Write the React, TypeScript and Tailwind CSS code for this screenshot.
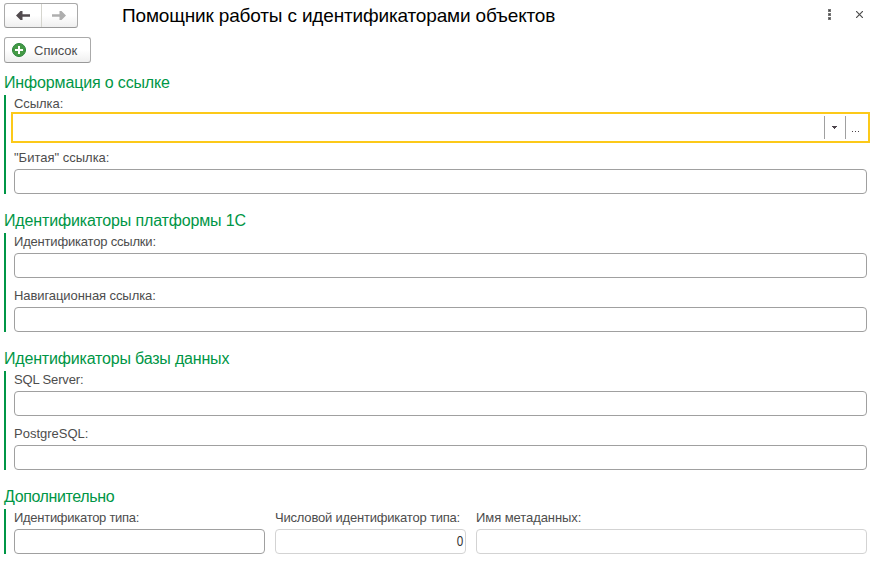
import type { ReactNode } from "react";

function Label({ text, spacing = "" }: { text: string; spacing?: string }) {
  return <span className={`block h-5 whitespace-nowrap text-[13px] leading-[18px] text-[#4d4d4d] ${spacing}`}>{text}</span>;
}

function Field({
  label,
  spacing,
  className = "",
  box = "border-[#a0a0a0]",
  value = "",
}: {
  label: string;
  spacing?: string;
  className?: string;
  box?: string;
  value?: string;
}) {
  return (
    <label className={`block ${className}`}>
      <Label text={label} spacing={spacing} />
      <span className={`flex h-[25px] items-center justify-end rounded-[4px] border bg-white pr-[2px] text-[13px] text-[#333] ${box}`}>
        <span className="origin-right scale-x-90 scale-y-110">{value}</span>
      </span>
    </label>
  );
}

function Section({ title, spacing = "", children }: { title: string; spacing?: string; children: ReactNode }) {
  return (
    <section>
      <h2 className={`h-6 whitespace-nowrap text-[16px] leading-[23px] text-[#009646] ${spacing}`}>{title}</h2>
      <div className="border-l-2 border-[#009646] pl-2">{children}</div>
    </section>
  );
}

function ReferenceField() {
  return (
    <div>
      <Label text="Ссылка:" spacing="tracking-[-0.05px]" />
      <div className="-mx-[3px] -my-[3px] flex h-[31px] items-start justify-end border-2 border-[#fcc919] bg-white pt-[2px]">
        <button className="flex h-[23px] w-[21px] items-center justify-center border-l border-[#a0a0a0] pr-[2px]" aria-label="Выбрать">
          <svg width="5" height="3" viewBox="0 0 5 3" shapeRendering="crispEdges" fill="#4d444b">
            <path d="M0 0h5v1H0zM1 1h3v1H1zM2 2h1v1H2z" />
          </svg>
        </button>
        <button className="flex h-[23px] w-[23px] items-center justify-center border-l border-[#a0a0a0] pr-[2px] pt-[7px]" aria-label="Открыть">
          <svg width="8" height="1" viewBox="0 0 8 1" shapeRendering="crispEdges" fill="#4d444b">
            <path d="M0 0h1v1H0zM3 0h1v1H3zM6 0h1v1H6z" />
          </svg>
        </button>
      </div>
    </div>
  );
}

export default function App() {
  return (
    <main className="h-[563px] w-[874px] overflow-hidden bg-white pl-1 pr-[7px] pt-[3px] font-['Liberation_Sans',Arial,sans-serif]">
      <header className="flex h-[25px] items-center">
        <div className="flex h-[25px] w-[74px] rounded-[3px] border border-[#aaa] border-b-[#999] bg-linear-to-b from-white from-50% to-[#efefef]">
          <button className="flex w-[37px] items-center justify-center border-r border-[#d5d5ce]" aria-label="Назад">
            <svg width="14" height="11" viewBox="0 0 14 11" fill="#514a4e">
              <path d="M0 5.500L4.500 1H6.500V4.250H14V6.750H6.500V10H4.500z" />
            </svg>
          </button>
          <button className="flex w-[35px] items-center justify-center pr-[2px]" aria-label="Вперед">
            <svg width="14" height="11" viewBox="0 0 14 11" fill="#aeaeae">
              <path d="M14 5.500L9.500 1H7.500V4.250H0V6.750H7.500V10H9.500z" />
            </svg>
          </button>
        </div>
        <h1 className="ml-11 whitespace-nowrap pt-px text-[19px] leading-6 tracking-[-0.16px] text-black">Помощник работы с идентификаторами объектов</h1>
        <div className="ml-auto flex items-center gap-[25px] pr-1">
          <button className="-mt-[2px]" aria-label="Меню">
            <svg width="3" height="11" viewBox="0 0 3 11" fill="#777">
              <path d="M0 0h3v3H0zM0 4h3v3H0zM0 8h3v3H0z" />
              <path d="M1 1h1v1H1zM1 5h1v1H1zM1 9h1v1H1z" fill="#444" />
            </svg>
          </button>
          <button className="-mt-[2px]" aria-label="Закрыть">
            <svg width="7" height="7" viewBox="0 0 7 7" stroke="#4d4d4d" strokeWidth="1.200">
              <path d="M0 0L7 7M7 0L0 7" />
            </svg>
          </button>
        </div>
      </header>

      <button className="mt-[9px] flex h-[26px] w-[87px] items-center rounded-[3px] border border-[#aaa] border-b-[#999] bg-linear-to-b from-white from-50% to-[#efefef] pl-[7px]">
        <svg width="14" height="14" viewBox="0 0 14 14">
          <circle cx="7" cy="7" r="6.500" fill="#459a46" stroke="#28843a" />
          <path d="M7 3v8M3 7h8" stroke="#fff" strokeWidth="2" />
        </svg>
        <span className="ml-2 whitespace-nowrap pt-px text-[13px] text-[#4d4d4d]">Список</span>
      </button>

      <div className="mt-2 flex flex-col gap-[15px]">
        <Section title="Информация о ссылке" spacing="tracking-[-0.15px]">
          <div className="flex flex-col gap-[9px]">
            <div className="h-[45px]"><ReferenceField /></div>
            <Field label={'"Битая" ссылка:'} />
          </div>
        </Section>
        <Section title="Идентификаторы платформы 1С" spacing="tracking-[-0.15px]">
          <div className="flex flex-col gap-[9px]">
            <Field label="Идентификатор ссылки:" spacing="tracking-[-0.19px]" />
            <Field label="Навигационная ссылка:" spacing="tracking-[-0.08px]" />
          </div>
        </Section>
        <Section title="Идентификаторы базы данных" spacing="tracking-[-0.18px]">
          <div className="flex flex-col gap-[9px]">
            <Field label="SQL Server:" spacing="tracking-[-0.15px]" />
            <Field label="PostgreSQL:" />
          </div>
        </Section>
        <Section title="Дополнительно" spacing="tracking-[-0.38px]">
          <div className="flex gap-[10px]">
            <Field label="Идентификатор типа:" spacing="tracking-[-0.28px]" className="w-[251px]" />
            <Field label="Числовой идентификатор типа:" spacing="tracking-[-0.2px]" className="w-[191px]" box="border-[#d3d3d3]" value="0" />
            <Field label="Имя метаданных:" spacing="tracking-[-0.07px]" className="w-[391px]" box="border-[#d3d3d3]" />
          </div>
        </Section>
      </div>
    </main>
  );
}
